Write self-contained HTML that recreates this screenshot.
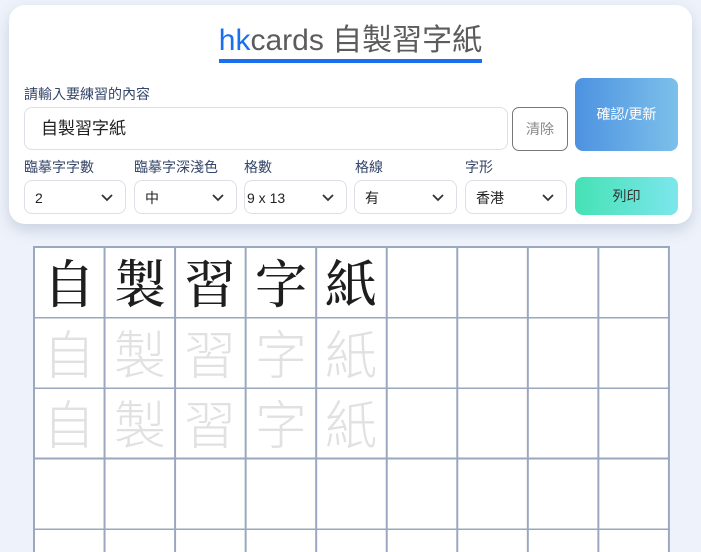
<!DOCTYPE html>
<html><head><meta charset="utf-8"><style>
html,body{margin:0;width:701px;height:552px;overflow:hidden}
body{background:#eef2fa;font-family:"Liberation Sans","Noto Sans CJK TC",sans-serif;position:relative}
.card{position:absolute;left:9px;top:5px;width:683px;height:219px;background:#fff;border-radius:16px;box-shadow:0 6px 14px rgba(120,135,170,.3)}
.abs{position:absolute}
.title{left:0;width:701px;top:21px;text-align:center;font-size:30px;color:#5c5c5c;line-height:40px}
.ul{left:219px;top:59px;width:263px;height:4px;background:#1a6ff0}
.lbl{font-size:14px;color:#34466a}
.inp{left:24px;top:107px;height:43px;border:1px solid #dcdfe6;border-radius:8px;font-size:17px;line-height:42px;padding-left:16px;box-sizing:border-box;width:484px;color:#222}
.clr{left:512px;top:107px;width:56px;height:44px;border:1px solid #777;border-radius:7px;box-sizing:border-box;font-size:14px;color:#888;text-align:center;line-height:42px}
.btn{border-radius:8px;text-align:center;font-size:14px}
.sel{top:180px;height:34px;border:1px solid #dcdfe6;border-radius:8px;box-sizing:border-box;font-size:14px;line-height:34px;padding-left:10px;color:#222}
.sel svg{position:absolute;right:12px;top:13px}
.grid{position:absolute;left:33px;top:246px;width:637px;height:320px;background-color:#fff;
background-image:linear-gradient(90deg,#9aa7bf 2px,transparent 2px),linear-gradient(#9aa7bf 2px,transparent 2px);
background-size:70.56px 70.5px}
.c{position:absolute;width:70px;text-align:center;font-family:"Noto Serif CJK SC","Noto Serif CJK TC",serif;font-size:52px;line-height:70px;color:#1e1e1e;font-weight:500}
.g{color:#e1e1e1;font-family:"Noto Sans CJK TC",sans-serif;font-weight:300}
</style></head><body>
<div class="card"></div>
<div class="abs title"><span style="color:#1a6ff0">hk</span>cards 自製習字紙</div>
<div class="abs ul"></div>
<div class="abs lbl" style="left:24px;top:84px">請輸入要練習的內容</div>
<div class="abs inp">自製習字紙</div>
<div class="abs clr">清除</div>
<div class="abs btn" style="left:575px;top:78px;width:103px;height:73px;line-height:73px;color:#fff;background:linear-gradient(90deg,#4d92e1,#7cc0ea)">確認/更新</div>
<div class="abs btn" style="left:575px;top:177px;width:103px;height:38px;line-height:38px;color:#333;background:linear-gradient(90deg,#45e2b4,#7ce6ec)">列印</div>
<div class="abs lbl" style="left:24px;top:157px">臨摹字字數</div>
<div class="abs lbl" style="left:134px;top:157px">臨摹字深淺色</div>
<div class="abs lbl" style="left:244px;top:157px">格數</div>
<div class="abs lbl" style="left:355px;top:157px">格線</div>
<div class="abs lbl" style="left:465px;top:157px">字形</div>
<div class="abs sel" style="left:24px;width:102px">2<svg width="12" height="8"><path d="M1 1l5 5 5-5" fill="none" stroke="#333" stroke-width="1.8"/></svg></div>
<div class="abs sel" style="left:134px;width:103px">中<svg width="12" height="8"><path d="M1 1l5 5 5-5" fill="none" stroke="#333" stroke-width="1.8"/></svg></div>
<div class="abs sel" style="left:244px;width:103px;padding-left:2px">9 x 13<svg width="12" height="8"><path d="M1 1l5 5 5-5" fill="none" stroke="#333" stroke-width="1.8"/></svg></div>
<div class="abs sel" style="left:354px;width:103px">有<svg width="12" height="8"><path d="M1 1l5 5 5-5" fill="none" stroke="#333" stroke-width="1.8"/></svg></div>
<div class="abs sel" style="left:465px;width:102px">香港<svg width="12" height="8"><path d="M1 1l5 5 5-5" fill="none" stroke="#333" stroke-width="1.8"/></svg></div>
<div class="grid"></div>
<div class="c" style="left:34px;top:246px">自</div><div class="c" style="left:105px;top:246px">製</div><div class="c" style="left:175px;top:246px">習</div><div class="c" style="left:246px;top:246px">字</div><div class="c" style="left:316px;top:246px">紙</div>
<div class="c g" style="left:34px;top:317px">自</div><div class="c g" style="left:105px;top:317px">製</div><div class="c g" style="left:175px;top:317px">習</div><div class="c g" style="left:246px;top:317px">字</div><div class="c g" style="left:316px;top:317px">紙</div>
<div class="c g" style="left:34px;top:387px">自</div><div class="c g" style="left:105px;top:387px">製</div><div class="c g" style="left:175px;top:387px">習</div><div class="c g" style="left:246px;top:387px">字</div><div class="c g" style="left:316px;top:387px">紙</div>
</body></html>
